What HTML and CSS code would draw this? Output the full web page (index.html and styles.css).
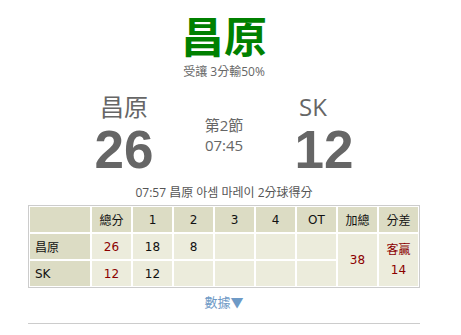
FILE: index.html
```html
<!DOCTYPE html>
<html lang="zh-Hant">
<head>
<meta charset="utf-8">
<link rel="stylesheet" href="styles.css">
</head>
<body>
<div class="wrap">
  <h1 class="title">昌原</h1>
  <div class="sub">受讓 3分輸50%</div>
  <div class="board">
    <div class="team team-home">
      <div class="tname">昌原</div>
      <div class="tscore">26</div>
    </div>
    <div class="mid">
      <div class="period">第2節</div>
      <div class="clock">07:45</div>
    </div>
    <div class="team team-away">
      <div class="tname">SK</div>
      <div class="tscore">12</div>
    </div>
  </div>
  <div class="play">07:57 昌原 아셈 마레이 2分球得分</div>
  <table class="box">
    <tr class="head">
      <td class="c-team"></td>
      <td>總分</td><td>1</td><td>2</td><td>3</td><td>4</td><td>OT</td><td>加總</td><td>分差</td>
    </tr>
    <tr>
      <td class="c-team">昌原</td>
      <td class="red">26</td><td>18</td><td>8</td><td></td><td></td><td></td>
      <td class="red" rowspan="2">38</td>
      <td class="red diff" rowspan="2">客贏<br>14</td>
    </tr>
    <tr>
      <td class="c-team">SK</td>
      <td class="red">12</td><td>12</td><td></td><td></td><td></td><td></td>
    </tr>
  </table>
  <div class="more">數據▼</div>
  <div class="rule"></div>
</div>
</body>
</html>
```
FILE: styles.css
```css
html, body {
  margin: 0;
  padding: 0;
  background: #fff;
}
body {
  font-family: "Open Sans", "Noto Sans CJK TC", sans-serif;
  color: #666;
}
.wrap {
  width: 392px;
  margin-left: 28px;
  padding-top: 3px;
}
.title {
  margin: 0;
  text-align: center;
  font-family: "Noto Sans CJK TC", sans-serif;
  font-size: 43px;
  line-height: 62px;
  font-weight: bold;
  color: #008000;
}
.sub {
  text-align: center;
  font-size: 12px;
  line-height: 14px;
  color: #666;
}
.board {
  display: grid;
  grid-template-columns: 100px 100px 100px;
  margin-left: 46px;
  margin-top: 13px;
}
.team {
  display: flex;
  flex-direction: column;
}
.tname {
  font-size: 24px;
  line-height: 30px;
  text-align: center;
  color: #666;
}
.team-away .tname {
  text-align: left;
  padding-left: 25px;
}
.tscore {
  font-family: "Liberation Sans", Arial, sans-serif;
  font-weight: bold;
  font-size: 53px;
  line-height: 56px;
  text-align: center;
  color: #666;
}
.mid {
  padding-top: 23px;
  text-align: center;
  font-size: 15px;
  line-height: 20px;
  color: #666;
}
.play {
  text-align: center;
  font-size: 12px;
  line-height: 18px;
  color: #555;
  margin-top: 6px;
}
.box {
  border: 1px solid #ccc;
  border-collapse: separate;
  border-spacing: 0;
  table-layout: fixed;
  width: 392px;
  margin-top: 3px;
  font-family: "DejaVu Sans", "Noto Sans CJK TC", sans-serif;
  font-size: 12px;
  color: #111;
}
.box td {
  border: 1px solid #fff;
  width: 39px;
  height: 25px;
  padding: 0;
  text-align: center;
  background: #ececdc;
  font-family: "DejaVu Sans", "Noto Sans CJK TC", sans-serif;
}
.box td.c-team {
  text-align: left;
  padding-left: 5px;
  width: 55px;
  background: #dcdcc4;
}
.box .head td {
  background: #dcdcc4;
}
.box td.red {
  color: #8b0000;
}
.box td.diff {
  line-height: 20px;
}
.more {
  text-align: center;
  font-size: 13px;
  line-height: 20px;
  margin-top: 4px;
  color: #6e9ac6;
}
.rule {
  height: 1px;
  background: #ccc;
  margin-top: 11px;
}
```
